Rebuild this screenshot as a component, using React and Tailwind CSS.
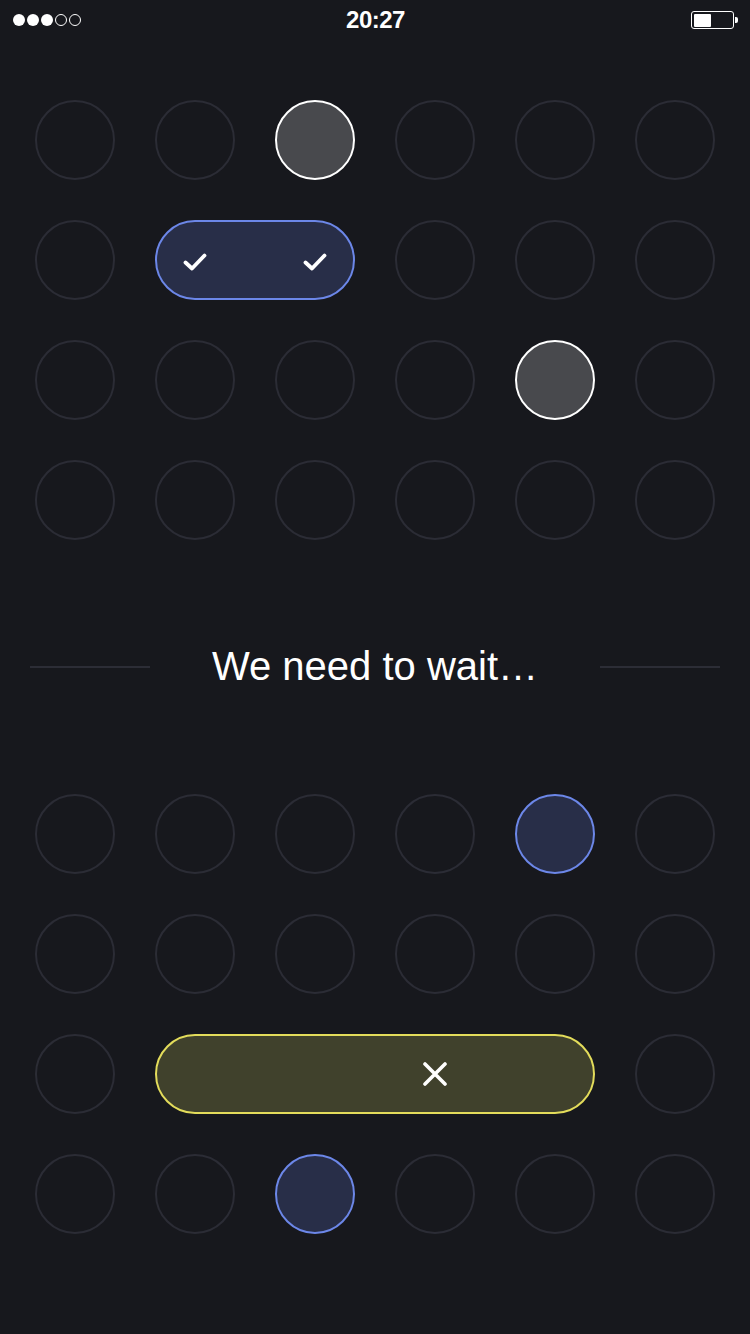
const Ring = () => (
  <div className="w-20 h-20 rounded-full border-2 border-[#2b2c35]" />
);

const Gray = () => (
  <div className="w-20 h-20 rounded-full border-2 border-white bg-[#48494d]" />
);

const Blue = () => (
  <div className="w-20 h-20 rounded-full border-2 border-[#6c87e8] bg-[#282e48]" />
);

const Check = () => (
  <svg className="w-6 h-6 mt-1" viewBox="0 0 24 24" fill="none" stroke="white" strokeWidth="3.8" strokeLinecap="round" strokeLinejoin="round">
    <path d="M2.5 12.5l6.5 6 12.5-13" />
  </svg>
);

const Cross = () => (
  <svg className="w-6 h-6" viewBox="0 0 24 24" fill="none" stroke="white" strokeWidth="3.6" strokeLinecap="round">
    <path d="M2 2l20 20M22 2L2 22" />
  </svg>
);

const StatusBar = () => (
  <div className="grid grid-cols-[1fr_auto_1fr] items-center h-10 pl-[13px] pr-[12px]">
    <div className="flex items-center gap-[2px]">
      {[1, 1, 1, 0, 0].map((on, i) => (
        <div
          key={i}
          className={on ? 'w-[12px] h-[12px] rounded-full bg-white' : 'w-[12px] h-[12px] rounded-full border border-white'}
        />
      ))}
    </div>
    <div className="text-white font-bold text-[24px] leading-none tracking-[-0.5px] font-['Liberation_Sans',Arial,sans-serif]">20:27</div>
    <div className="flex items-center justify-end">
      <div className="w-[43px] h-[18px] rounded-[3px] border border-white p-[1.5px]">
        <div className="w-[17px] h-full bg-white rounded-[1px]" />
      </div>
      <div className="w-[3px] h-[6px] bg-white rounded-r-[2px] ml-[1px]" />
    </div>
  </div>
);

export default function App() {
  return (
    <div className="min-h-[1334px] bg-[#17181d] font-['Liberation_Sans',Arial,sans-serif]">
      <StatusBar />

      {/* upper board */}
      <div className="mt-[60px] pl-[35px] grid grid-cols-[repeat(6,80px)] gap-10">
        <Ring /><Ring /><Gray /><Ring /><Ring /><Ring />

        <Ring />
        <div className="col-span-2 h-20 rounded-full border-2 border-[#6c87e8] bg-[#282e48]">
          <div className="grid grid-cols-[repeat(2,80px)] gap-10 h-full -mx-[2px]">
            <div className="flex items-center justify-center"><Check /></div>
            <div className="flex items-center justify-center"><Check /></div>
          </div>
        </div>
        <Ring /><Ring /><Ring />

        <Ring /><Ring /><Ring /><Ring /><Gray /><Ring />

        <Ring /><Ring /><Ring /><Ring /><Ring /><Ring />
      </div>

      {/* divider */}
      <div className="h-[254px] flex items-center justify-between px-[30px]">
        <div className="w-[120px] h-[2px] bg-[#2c2d36]" />
        <div className="text-white text-[40px] leading-none -mt-[2px]">We need to wait…</div>
        <div className="w-[120px] h-[2px] bg-[#2c2d36]" />
      </div>

      {/* lower board */}
      <div className="pl-[35px] grid grid-cols-[repeat(6,80px)] gap-10">
        <Ring /><Ring /><Ring /><Ring /><Blue /><Ring />

        <Ring /><Ring /><Ring /><Ring /><Ring /><Ring />

        <Ring />
        <div className="col-span-4 h-20 rounded-full border-2 border-[#e3dc5b] bg-[#40412c]">
          <div className="grid grid-cols-[repeat(4,80px)] gap-10 h-full -mx-[2px]">
            <div />
            <div />
            <div className="flex items-center justify-center"><Cross /></div>
          </div>
        </div>
        <Ring />

        <Ring /><Ring /><Blue /><Ring /><Ring /><Ring />
      </div>
    </div>
  );
}
